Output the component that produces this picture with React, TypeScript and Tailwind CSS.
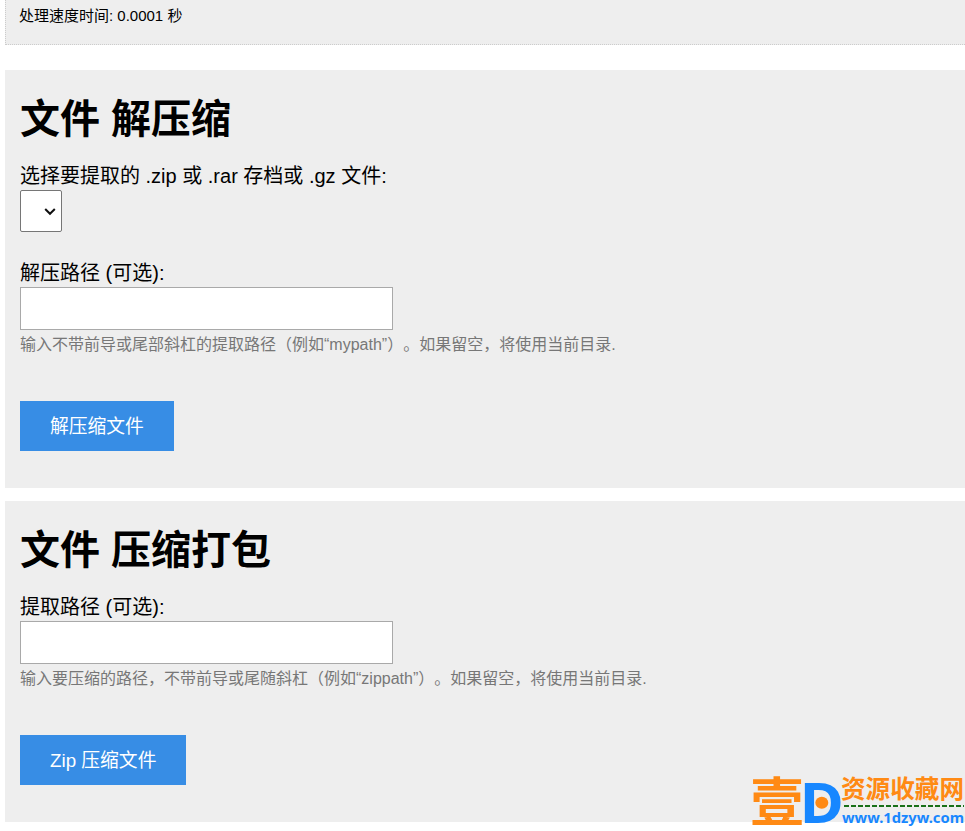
import type { ReactNode } from "react";

function PathField({ label, hint }: { label: string; hint: string }) {
  return (
    <div>
      <label className="block h-[30px] pt-px text-[20px] leading-[30px] whitespace-nowrap">{label}</label>
      <input type="text" className="block h-[43px] w-[373px] border border-[#a9a9a9] bg-white px-2 outline-none" />
      <p className="h-[30px] text-[16px] leading-[30px] whitespace-nowrap text-[#777777] [text-spacing-trim:space-all]">{hint}</p>
    </div>
  );
}

function ActionButton({ children }: { children: ReactNode }) {
  return (
    <button className="mt-[41px] block h-[50px] bg-[#378de5] px-[30px] pt-px text-[18.8px] leading-[49px] whitespace-nowrap text-white">
      {children}
    </button>
  );
}

function Logo() {
  return (
    <svg className="absolute right-0 bottom-0 h-[66px] w-[220px] overflow-visible" viewBox="0 0 220 66">
      <text x="5" y="56.7" fontSize="53" fontWeight="700" fill="#ff8a14" textLength="54" lengthAdjust="spacingAndGlyphs" fontFamily="'Noto Sans CJK SC', sans-serif">壹</text>
      <text x="54.8" y="58" fontSize="56" fontWeight="700" fill="#1787ff" textLength="44" lengthAdjust="spacingAndGlyphs" fontFamily="'Noto Sans', sans-serif">D</text>
      <ellipse cx="76.8" cy="37.7" rx="6.5" ry="6" fill="#ff8a14" />
      <text x="96" y="33" fontSize="25" fontWeight="700" fill="#ff8a14" textLength="123" lengthAdjust="spacingAndGlyphs" fontFamily="'Noto Sans CJK SC', sans-serif">资源收藏网</text>
      <path d="M99 41H219" stroke="#187018" strokeWidth="2" strokeDasharray="5 2" />
      <text x="97" y="58" fontSize="14.5" fontWeight="700" fill="#1787ff" textLength="122" lengthAdjust="spacingAndGlyphs" fontFamily="'Noto Sans', sans-serif">www.1dzyw.com</text>
    </svg>
  );
}

export default function App() {
  return (
    <main className="relative h-[831px] w-[965px] overflow-hidden bg-white pl-[5px] font-['Liberation_Sans','Noto_Sans_CJK_SC',sans-serif] text-black">
      <div className="h-[45px] border-b border-l border-dotted border-[#cccccc] bg-[#eeeeee] pl-[13px] text-[15px] leading-[32px]">
        处理速度时间: 0.0001 秒
      </div>

      <section className="mt-[25px] h-[418px] bg-[#eeeeee] pt-[19px] pl-[15px]">
        <h1 className="h-[60px] text-[40px] leading-[60px] font-bold">文件 解压缩</h1>
        <label className="mt-[11px] block h-[30px] pt-px text-[20px] leading-[30px]">
          选择要提取的 .zip 或 .rar 存档或 .gz 文件:
        </label>
        <div className="flex h-[42px] w-[42px] items-center justify-end rounded-[2px] border border-[#767676] bg-white pr-[5px]">
          <svg className="h-3 w-3" viewBox="0 0 12 12" fill="none">
            <path d="M1.2 4L6 8.8L10.8 4" stroke="#101010" strokeWidth="2" />
          </svg>
        </div>
        <div className="mt-[25px]">
          <PathField label="解压路径 (可选):" hint="输入不带前导或尾部斜杠的提取路径（例如“mypath”）。如果留空，将使用当前目录." />
        </div>
        <ActionButton>解压缩文件</ActionButton>
      </section>

      <section className="mt-[13px] h-[321px] bg-[#eeeeee] pt-[19px] pl-[15px]">
        <h1 className="h-[60px] text-[40px] leading-[60px] font-bold">文件 压缩打包</h1>
        <div className="mt-[11px]">
          <PathField label="提取路径 (可选):" hint="输入要压缩的路径，不带前导或尾随斜杠（例如“zippath”）。如果留空，将使用当前目录." />
        </div>
        <ActionButton>Zip 压缩文件</ActionButton>
      </section>

      <Logo />
    </main>
  );
}
